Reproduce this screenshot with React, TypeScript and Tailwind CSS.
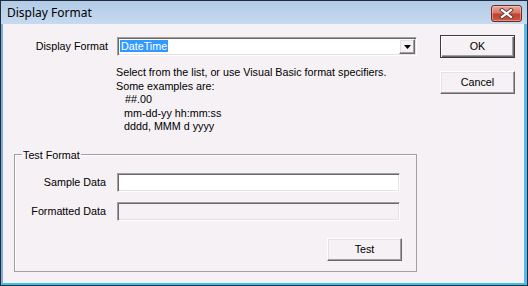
import React from 'react'

const FACE = 'bg-[#f5f1f5]'
const SUNKEN =
  'border border-t-[#a0a0a0] border-l-[#a0a0a0] border-b-white border-r-white shadow-[inset_1px_1px_0_#696969,inset_-1px_-1px_0_#e3e3e3]'
const RAISED =
  'border border-t-white border-l-white border-b-[#696969] border-r-[#696969] shadow-[inset_-1px_-1px_0_#a0a0a0,inset_1px_1px_0_#e3e3e3]'

function CloseButton() {
  return (
    <div className="mt-[4px] mr-[5px] ml-auto flex h-[17px] w-[31px] items-center justify-center rounded-[3px] border border-[#6e2a26] bg-[linear-gradient(to_bottom,#e9a99c_0%,#d67764_45%,#c3402e_55%,#cc5a40_100%)] shadow-[inset_0_0_0_1px_rgba(255,255,255,0.35)]">
      <svg width="15" height="11" viewBox="0 0 15 11">
        <path d="M3 2 L12 9 M12 2 L3 9" stroke="#5a3a3a" strokeWidth="4" strokeLinecap="square" />
        <path d="M3 2 L12 9 M12 2 L3 9" stroke="#ffffff" strokeWidth="2.2" strokeLinecap="square" />
      </svg>
    </div>
  )
}

function Combo() {
  return (
    <div className={`flex h-[19px] w-[300px] items-center bg-white ${SUNKEN}`}>
      <div className="ml-[2px] flex-1">
        <span className="bg-[#3399ff] px-[1px] leading-[13px] text-white">DateTime</span>
      </div>
      <div className={`mr-[1px] flex h-[15px] w-[16px] items-center justify-center ${FACE} ${RAISED}`}>
        <svg width="7" height="4" viewBox="0 0 7 4">
          <path d="M0 0 H7 L3.5 4 Z" fill="#000" />
        </svg>
      </div>
    </div>
  )
}

function Button({ label, isDefault }: { label: string; isDefault?: boolean }) {
  const cls = isDefault
    ? 'border border-[#3c3c3c] shadow-[inset_1px_1px_0_#fff,inset_-1px_-1px_0_#696969,inset_-2px_-2px_0_#a0a0a0]'
    : RAISED
  return (
    <div className={`flex h-[23px] w-[75px] items-center justify-center ${FACE} ${cls}`}>
      {label}
    </div>
  )
}

export default function App() {
  return (
    <div
      className="h-[286px] w-[528px] bg-[#1e2c3c] p-[1px] text-[10.75px] text-black"
      style={{ fontFamily: '"Liberation Sans", Arial, sans-serif' }}
    >
      <div className="flex h-full flex-col">
        {/* title bar */}
        <div className="flex h-[23px] bg-[linear-gradient(to_bottom,#b3cbe6,#c6daf0)]">
          <span
            className="pl-[6px] pt-[4px] text-[12px] leading-[15px] text-black"
            style={{ fontFamily: '"Noto Sans", "Open Sans", sans-serif' }}
          >
            Display Format
          </span>
          <CloseButton />
        </div>

        {/* body */}
        <div
          className={`flex flex-1 border-b-2 border-l-2 border-r-3 border-b-[#36c2ee] border-l-[#7faedc] border-r-[#5cb8e6] ${FACE}`}
        >
          <div className="w-[414px] pl-[11px] pt-[13px]">
            <div className="flex items-center">
              <div className="w-[94px] text-right">Display Format</div>
              <div className="ml-[9px]">
                <Combo />
              </div>
            </div>

            <div className="ml-[102px] mt-[10px] leading-[13.5px]">
              <div>Select from the list, or use Visual Basic format specifiers.</div>
              <div>Some examples are:</div>
              <div className="pl-[9px]">##.00</div>
              <div className="pl-[8px]">mm-dd-yy hh:mm:ss</div>
              <div className="pl-[8px]">dddd, MMM d yyyy</div>
            </div>

            <fieldset className="mt-[14px] w-[403px] border border-[#a0a0a0] pb-[10px] shadow-[inset_1px_1px_0_#fff]">
              <legend className="ml-[7px] px-[1px] leading-[14px]">Test Format</legend>
              <div className="flex items-center pt-[11px]">
                <div className="w-[91px] text-right">Sample Data</div>
                <div className={`ml-[11px] h-[19px] w-[283px] bg-white ${SUNKEN}`} />
              </div>
              <div className="mt-[10px] flex items-center">
                <div className="w-[91px] text-right">Formatted Data</div>
                <div className={`ml-[11px] h-[19px] w-[283px] ${FACE} ${SUNKEN}`} />
              </div>
              <div className="mt-[17px] flex justify-end pr-[14px]">
                <Button label="Test" />
              </div>
            </fieldset>
          </div>

          <div className="ml-auto mr-[9px] flex flex-col pt-[11px]">
            <Button label="OK" isDefault />
            <div className="mt-[13px]">
              <Button label="Cancel" />
            </div>
          </div>
        </div>
      </div>
    </div>
  )
}
